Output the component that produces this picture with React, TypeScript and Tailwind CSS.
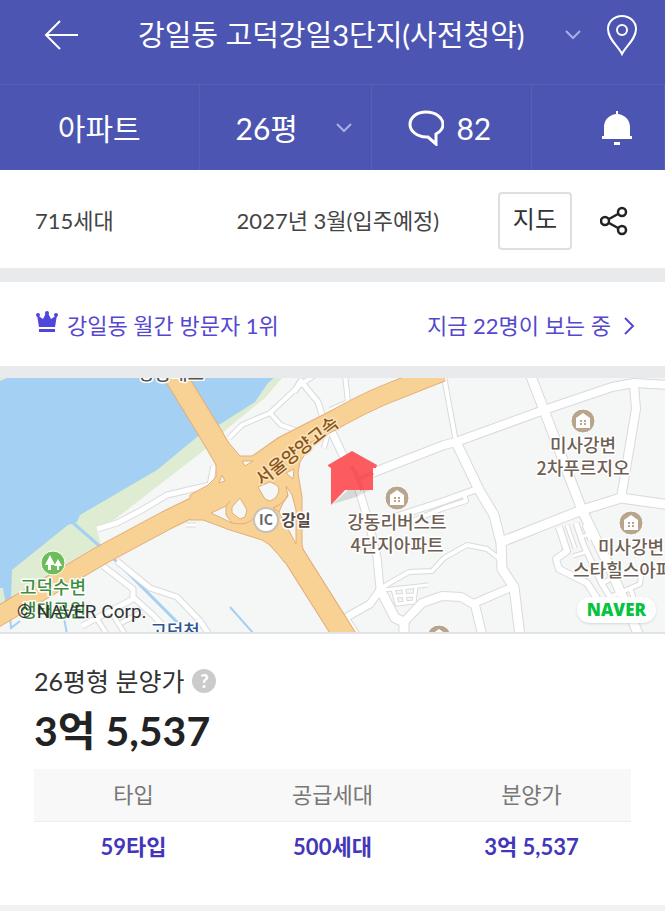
import type { ReactNode } from "react";

const priceRows = [{ type: "59타입", supply: "500세대", price: "3억 5,537" }];

// casing is drawn first, then the fill on top, so crossings stay open
const roads: { d: string; w: number }[] = [
  { d: "M229 60L242 47L270 35L300 7L315 -3", w: 4 },
  { d: "M270 35L281 47L306 56", w: 4 },
  { d: "M294 14L301 3L308 12L318 24L323 40", w: 5 },
  { d: "M345 -3L348 24L330 32", w: 4 },
  { d: "M328 54L324 70", w: 4 },
  { d: "M328 46L340 71L359 112L369 145L377 179L380 211", w: 7 },
  { d: "M382 209L370 226L345 240L357 258", w: 7 },
  { d: "M380 211L395 240L404 244L404 260", w: 9 },
  { d: "M380 211L393 203L409 194L432 193L444 180L467 167L487 171L501 182", w: 4 },
  { d: "M359 100L444 67L456 64L544 32L612 9L634 5L670 7", w: 8 },
  { d: "M395 139L444 123L480 110", w: 6 },
  { d: "M405 146L444 130L466 123L464 116", w: 4 },
  { d: "M444 -2L449 26L456 64", w: 4 },
  { d: "M456 64L479 112L494 137L501 165L502 191L514 209L520 258", w: 9 },
  { d: "M530 -4L544 32L582 132L611 192L640 260", w: 9 },
  { d: "M501 164L582 132L621 120L670 127", w: 9 },
  { d: "M634 7L636 31L621 120", w: 8 },
  { d: "M404 244L422 225L442 218L461 219L475 227L483 260", w: 8 },
  { d: "M475 225L512 209", w: 7 },
  { d: "M559 149L567 173L556 181L559 191L587 205L598 222", w: 6 },
  { d: "M576 145L584 168L602 206L612 222", w: 5 },
  { d: "M567 147L575 170M584 147L590 162M580 159L592 156M573 178L586 174", w: 3 },
  { d: "M601 206L614 199M610 219L640 206L642 190M630 210L636 226", w: 4 },
  { d: "M383 212L428 207M393 211L397 226L414 224L416 209M404 211L405 224M395 218L415 217", w: 3 },
  { d: "M97 151L117 145L142 132L167 117L210 107L214 88", w: 5 },
  { d: "M186 147L196 147", w: 3 },
  { d: "M117 183L150 210L177 219L200 243L210 258", w: 5 },
  { d: "M103 188L133 211L133 221L82 248M133 219L154 238L172 258", w: 5 },
  { d: "M110 232L126 258M97 241L108 258M121 245L142 234", w: 4 },
];

const highways: { d: string; w: number }[] = [
  { d: "M-6 241L100 178L167 142L208 122L239 99L283 68L332 43Q366 24 389 15T442 -6", w: 18 },
  { d: "M174 -4L212 58L234 96L265 146L293 176L346 260", w: 21 },
];

const junction =
  "M216 86V99L208 107L190 117V142L203 142L230 152L262 162L273 169L284 184H306L302 167V119L298 95L300 84L312 66L270 71Q262 78 254 78H240L228 64Z";

// islands between the ramps
const islands = [
  "M242 83H253L245 88Z",
  "M258 109L270 104Q279 107 279 112Q278 120 270 123L265 121Z",
  "M240 120L232 129V135L240 141L245 139L247 132Z",
  "M211 135L226 128V137L232 145Z",
  "M286 108L292 117L296 132V166L279 134L283 125L288 118Z",
  "M286 95L294 91L293 101Z",
  "M222 97L219 105L225 103Z",
];

function Pin({ x, y }: { x: number; y: number }) {
  return (
    <g transform={`translate(${x} ${y})`}>
      <circle r="12" fill="#b8a58b" stroke="#fff" />
      <path d="M0 -8L7 -3V7H-7V-3Z" fill="#fff" />
      <path d="M-3 -1H-1V1H-3ZM1 -1H3V1H1ZM-3 2H-1V4H-3ZM1 2H3V4H1Z" fill="#b8a58b" />
    </g>
  );
}

function MapLabel({ x, y, lines }: { x: number; y: number; lines: string[] }) {
  return (
    <g fill="#6f5f54">
      {lines.map((line, i) => (
        <text key={line} x={x} y={y + i * 23}>
          {line}
        </text>
      ))}
    </g>
  );
}

function AreaMap() {
  return (
    <svg
      viewBox="0 0 665 254"
      preserveAspectRatio="xMidYMid slice"
      className="block h-[254px] w-full font-['Noto_Sans_CJK_KR',sans-serif] text-[18px] font-medium"
      role="img"
      aria-label="고덕강일3단지 위치"
    >
      <rect width="665" height="254" fill="#f5f6f6" />
      <path d="M0 0H282L265 20L229 49L207 70L110 145L97 152L102 170L60 210L0 240Z" fill="#deedd2" />
      <path d="M7 0H274L268 5L255 24L222 45L197 59L157 92L80 137L77 144L68 147L12 192L11 222L6 228L3 210H0V3Z" fill="#a4d1f3" />
      <path d="M72 144L102 170L116 183L180 247" fill="none" stroke="#a4d1f3" strokeWidth="3" />
      <path d="M230 229L254 256M10 238L11 250L20 243M64 240L67 256" fill="none" stroke="#a4d1f3" strokeWidth="2" />

      <g fill="none" strokeLinejoin="round">
        {roads.map((r) => (
          <path key={r.d} d={r.d} stroke="#d9dadb" strokeWidth={r.w + 2} />
        ))}
        {roads.map((r) => (
          <path key={r.d} d={r.d} stroke="#fff" strokeWidth={r.w} />
        ))}
        {highways.map((r) => (
          <path key={r.d} d={r.d} stroke="#e3ae78" strokeWidth={r.w + 2} />
        ))}
        <path d={junction} fill="#f8d195" stroke="#e3ae78" />
        {highways.map((r) => (
          <path key={r.d} d={r.d} stroke="#f8d195" strokeWidth={r.w} />
        ))}
        {islands.map((d) => (
          <path key={d} d={d} fill="#f5f6f6" stroke="#e3ae78" />
        ))}
        <path d="M226 128L230 123M258 134Q252 146 240 146L232 145M279 134L273 130Q285 125 288 116" stroke="#e3ae78" />
      </g>

      <Pin x={583} y={43} />
      <Pin x={631} y={145} />
      <Pin x={397} y={120} />
      <Pin x={439} y={259} />

      <g textAnchor="middle" stroke="#fff" strokeWidth="3" strokeLinejoin="round" paintOrder="stroke">
        <MapLabel x={583} y={74} lines={["미사강변", "2차푸르지오"]} />
        <MapLabel x={631} y={176} lines={["미사강변", "스타힐스아파트"]} />
        <MapLabel x={397} y={151} lines={["강동리버스트", "4단지아파트"]} />
        <text x="171" y="2" fill="#555">강동대교</text>
        <text x="175" y="260" fill="#2f5591">고덕천</text>
        <g fill="#3f8f3f">
          <text x="53" y="216">고덕수변</text>
          <text x="53" y="239">생태공원</text>
        </g>
        <text transform="translate(301 78) rotate(-38)" fill="#8a5618" stroke="#fbe3bd">
          서울양양고속
        </text>
        <text x="296" y="148" fill="#5b4b42" className="text-[16px] font-bold">강일</text>
      </g>

      <circle cx="266" cy="142" r="12" fill="#fff" stroke="#c4c0bb" strokeWidth="2" />
      <text x="266" y="147" textAnchor="middle" fill="#666" className="text-[14px] font-bold">IC</text>

      <circle cx="53" cy="185" r="12" fill="#6dbd5c" stroke="#fff" />
      <path d="M50 177L55 187H51V192H48V187H45ZM58 181L62 188H59V192H57V188H54Z" fill="#fff" />

      <path d="M333 126L348 112H370L356 119Z" fill="#000" opacity=".12" />
      <path d="M352 73L377 87L376 90H373V112H345L331 127V90L328 88V87Z" fill="#fc5b60" />
      <path d="M352 88L358 101L373 95M358 101L362 112" fill="none" stroke="#f65459" strokeWidth="4" />
    </svg>
  );
}

function Chevron({ className }: { className: string }) {
  return (
    <svg viewBox="0 0 16 10" className={className} fill="none" stroke="currentColor" strokeWidth="2" aria-hidden="true">
      <path d="M1 1L8 8L15 1" />
    </svg>
  );
}

function TabCell({ children }: { children: ReactNode }) {
  return <div className="flex items-center border-r border-[#585fb8]">{children}</div>;
}

function Header() {
  return (
    <header className="bg-[#4c55b1] text-white">
      <div className="flex h-[85px] items-center border-b border-[#585fb8] pr-7 pb-[14px] pl-11">
        <button type="button" aria-label="뒤로" className="shrink-0">
          <svg viewBox="0 0 34 30" className="h-[30px] w-[34px]" fill="none" stroke="currentColor" strokeWidth="2">
            <path d="M34 15H2M16 1L2 15L16 29" />
          </svg>
        </button>
        <label className="relative ml-[60px] flex flex-1 items-center">
          <select aria-label="단지" className="w-full appearance-none bg-transparent text-[29px] leading-10">
            <option>강일동 고덕강일3단지(사전청약)</option>
          </select>
          <Chevron className="pointer-events-none absolute right-0 h-[10px] w-4 text-[#a9afe6]" />
        </label>
        <button type="button" aria-label="위치" className="ml-[26px] shrink-0">
          <svg viewBox="0 0 30 41" className="h-[41px] w-[30px]" fill="none" stroke="currentColor" strokeWidth="2">
            <path d="M15 39C11 31 1 24 1 14A14 13 0 0 1 29 14C29 24 19 31 15 39Z" />
            <circle cx="15" cy="15" r="5" />
          </svg>
        </button>
      </div>
      <nav className="grid h-[85px] grid-cols-[30fr_26fr_24fr_20fr] text-[30px] leading-10">
        <TabCell>
          <a href="#apt" className="w-full text-center">아파트</a>
        </TabCell>
        <TabCell>
          <label className="relative flex w-full items-center pr-[18px] pl-9">
            <select aria-label="평형" className="w-full appearance-none bg-transparent">
              <option>26평</option>
            </select>
            <Chevron className="pointer-events-none absolute right-[19px] h-[10px] w-4 text-[#a9afe6]" />
          </label>
        </TabCell>
        <TabCell>
          <a href="#talk" className="flex items-center gap-3 pl-9">
            <svg viewBox="0 0 36 36" className="size-9" fill="none" stroke="currentColor" strokeWidth="3" aria-hidden="true">
              <path d="M28 34L20 27H18C9 27 2 21 2 14.500C2 7 9 2 18 2S35 7 35 14.500C35 18 32 22 28 24Z" />
            </svg>
            82
          </a>
        </TabCell>
        <TabCell>
          <button type="button" aria-label="알림" className="mr-8 ml-auto">
            <svg viewBox="0 0 30 34" className="h-[34px] w-[30px]" fill="currentColor">
              <path d="M14 0H16V3C23 4 28 9 28 16V25H30V28H0V25H2V16C2 9 7 4 14 3Z" />
              <path d="M12 31H18V34H12Z" />
            </svg>
          </button>
        </TabCell>
      </nav>
    </header>
  );
}

export default function App() {
  return (
    <main className="min-h-screen bg-white font-['Lato','Noto_Sans_CJK_KR',sans-serif] text-[22px] leading-8 text-[#444]">
      <Header />

      <section className="flex h-[98px] items-center pt-1 pr-[37px] pl-[35px]">
        <p className="w-[34%]">715세대</p>
        <p className="flex-1 whitespace-nowrap">2027년 3월(입주예정)</p>
        <div className="flex items-center gap-7">
          <button type="button" className="h-[58px] rounded-sm border-2 border-[#dfdfdf] px-[13px] pb-1 text-[24px] text-[#333]">
            지도
          </button>
          <button type="button" aria-label="공유">
            <svg viewBox="0 0 28 30" className="h-[30px] w-7" fill="none" stroke="#222" strokeWidth="2.500">
              <circle cx="5" cy="15" r="4" />
              <circle cx="22" cy="6" r="4" />
              <circle cx="22" cy="24" r="4" />
              <path d="M9 13L18 8M9 17L18 22" />
            </svg>
          </button>
        </div>
      </section>

      <section className="flex h-[110px] items-center justify-between border-t-[14px] border-b-[12px] border-[#e8eaeb] pt-1 pr-[30px] pl-[35px] text-[#5548cf]">
        <p className="flex items-center gap-2">
          <svg viewBox="0 0 24 24" className="mb-2 size-6" fill="#5146dc" aria-hidden="true">
            <path d="M4 17L2 5L8 9L11 3H13L16 9L22 5L20 17ZM4 19H20V22H4Z" />
            <circle cx="3" cy="5" r="2" />
            <circle cx="12" cy="3" r="2" />
            <circle cx="21" cy="5" r="2" />
          </svg>
          강일동 월간 방문자 1위
        </p>
        <a href="#visitors" className="flex items-center gap-3">
          지금 22명이 보는 중
          <svg viewBox="0 0 12 18" className="h-[18px] w-3" fill="none" stroke="currentColor" strokeWidth="2" aria-hidden="true">
            <path d="M2 1L10 9L2 17" />
          </svg>
        </a>
      </section>

      <section className="relative border-b-2 border-[#e2e3e4]">
        <AreaMap />
        <p className="absolute bottom-1 left-[17px] font-['Roboto','Liberation_Sans',sans-serif] text-[19px] text-[#333]">
          © NAVER Corp.
        </p>
        <a
          href="#naver"
          className="absolute right-[9px] bottom-[9px] rounded-full bg-white px-[10px] font-['Open_Sans','Lato',sans-serif] text-[17px] leading-[26px] font-extrabold text-[#07c33f] shadow-sm"
        >
          NAVER
        </a>
      </section>

      <section className="border-b-[6px] border-[#f1f1f2] px-[34px] pt-[31px] pb-8">
        <h1 className="flex items-center gap-2 text-[25px] text-[#333]">
          26평형 분양가
          <button
            type="button"
            aria-label="분양가 안내"
            className="size-6 rounded-full bg-[#cbcbcb] text-[18px] leading-6 font-black text-white"
          >
            ?
          </button>
        </h1>
        <p className="mt-2 text-[41px] leading-[52px] font-bold text-[#222]">3억 5,537</p>
        <table className="mt-3 w-full table-fixed text-center">
          <thead className="bg-[#f8f8f8] text-[#777]">
            <tr className="h-[52px] border-b border-[#eee]">
              <th className="font-normal">타입</th>
              <th className="font-normal">공급세대</th>
              <th className="font-normal">분양가</th>
            </tr>
          </thead>
          <tbody className="font-bold text-[#4336b8]">
            {priceRows.map((row) => (
              <tr key={row.type} className="h-[52px]">
                <td>{row.type}</td>
                <td>{row.supply}</td>
                <td>{row.price}</td>
              </tr>
            ))}
          </tbody>
        </table>
      </section>
    </main>
  );
}
